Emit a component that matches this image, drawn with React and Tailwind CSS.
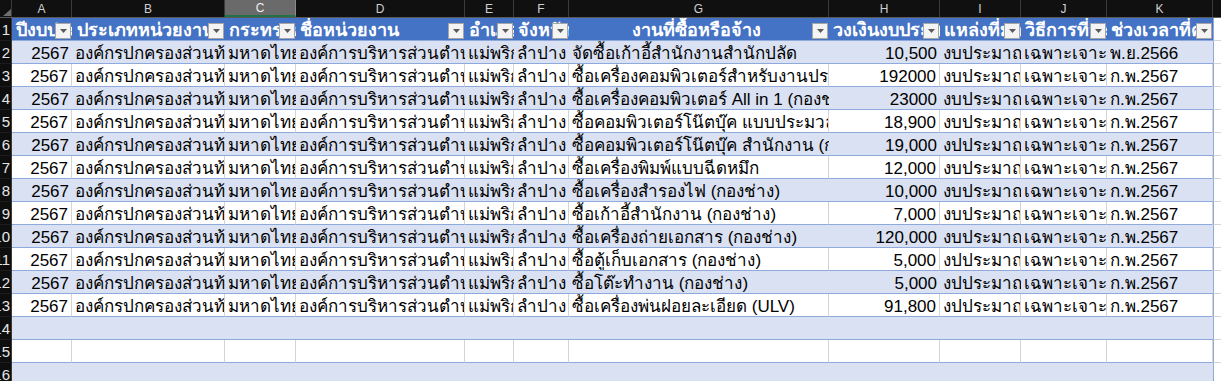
import React from "react";

const cols = [
  { letter: "A", w: "w-[60px]", head: "ปีงบประมาณ" },
  { letter: "B", w: "w-[153px]", head: "ประเภทหน่วยงาน", center: true },
  { letter: "C", w: "w-[71px]", head: "กระทรวง" },
  { letter: "D", w: "w-[169px]", head: "ชื่อหน่วยงาน" },
  { letter: "E", w: "w-[49px]", head: "อำเภอ" },
  { letter: "F", w: "w-[55px]", head: "จังหวัด" },
  { letter: "G", w: "w-[260px]", head: "งานที่ซื้อหรือจ้าง", center: true },
  { letter: "H", w: "w-[111px]", head: "วงเงินงบประมาณ (บาท)" },
  { letter: "I", w: "w-[81px]", head: "แหล่งที่มาของงบประมาณ" },
  { letter: "J", w: "w-[86px]", head: "วิธีการที่จะจัดหา" },
  { letter: "K", w: "w-[106px]", head: "ช่วงเวลาที่คาดว่าจะเริ่มดำเนินการ" },
];

const items = [
  ["จัดซื้อเก้าอี้สำนักงานสำนักปลัด", "10,500", "งบประมาณ", "พ.ย.2566"],
  ["ซื้อเครื่องคอมพิวเตอร์สำหรับงานประมวลผล", "192000", "งบประมาณ", "ก.พ.2567"],
  ["ซื้อเครื่องคอมพิวเตอร์ All in 1 (กองช่าง)", "23000", "งบประมาณ", "ก.พ.2567"],
  ["ซื้อคอมพิวเตอร์โน๊ตบุ๊ค แบบประมวลผล", "18,900", "งบประมาณ", "ก.พ.2567"],
  ["ซื้อคอมพิวเตอร์โน๊ตบุ๊ค สำนักงาน (กองคลัง)", "19,000", "งปประมาณ", "ก.พ.2567"],
  ["ซื้อเครื่องพิมพ์แบบฉีดหมึก", "12,000", "งบประมาณ", "ก.พ.2567"],
  ["ซื้อเครื่องสำรองไฟ (กองช่าง)", "10,000", "งบประมาณ", "ก.พ.2567"],
  ["ซื้อเก้าอี้สำนักงาน (กองช่าง)", "7,000", "งบประมาณ", "ก.พ.2567"],
  ["ซื้อเครื่องถ่ายเอกสาร (กองช่าง)", "120,000", "งบประมาณ", "ก.พ.2567"],
  ["ซื้อตู้เก็บเอกสาร (กองช่าง)", "5,000", "งปประมาณ", "ก.พ.2567"],
  ["ซื้อโต๊ะทำงาน (กองช่าง)", "5,000", "งปประมาณ", "ก.พ.2567"],
  ["ซื้อเครื่องพ่นฝอยละเอียด (ULV)", "91,800", "งปประมาณ", "ก.พ.2567"],
];

const rows = items.map((it) => [
  "2567",
  "องค์กรปกครองส่วนท้องถิ่น",
  "มหาดไทย",
  "องค์การบริหารส่วนตำบลแม่พริก",
  "แม่พริก",
  "ลำปาง",
  it[0],
  it[1],
  it[2],
  "เฉพาะเจาะจง",
  it[3],
]);

const rightAligned = [0, 7];

function FilterButton() {
  return (
    <div className="absolute right-[1px] bottom-[1px] w-[16px] h-[16px] bg-[#f4f4f4] border border-[#a6a6a6] flex items-center justify-center">
      <svg width="7" height="4" viewBox="0 0 7 4">
        <path d="M0 0 H7 L3.5 4 Z" fill="#5a5a5a" />
      </svg>
    </div>
  );
}

function RowHeader({ n }) {
  return (
    <div className="w-[12px] shrink-0 h-full bg-[#0e0e0e] border-r border-[#3a3a3a] border-b border-b-[#1c1c1c] overflow-hidden flex items-end justify-end pr-[1px]">
      <span className="text-[15px] leading-[20px] text-[#e6e6e6] whitespace-nowrap">{n}</span>
    </div>
  );
}

function Filler() {
  return <div className="flex-1 h-full bg-white border-l border-[#8ea9db] border-b border-b-[#d4d4d4]" />;
}

export default function App() {
  const emptyRows = [14, 15, 16];
  return (
    <div
      className="w-[1221px] h-[381px] overflow-hidden bg-white"
      style={{ fontFamily: '"Liberation Sans", Arial, sans-serif' }}
    >
      {/* column letters */}
      <div className="flex h-[18px] bg-[#101010] border-b border-[#5a5a5a]">
        <div className="w-[12px] shrink-0 border-r border-[#3a3a3a] relative">
          <svg className="absolute left-[3px] top-[9px]" width="8" height="7" viewBox="0 0 8 7">
            <path d="M8 0 V7 H0 Z" fill="#6f6f6f" />
          </svg>
        </div>
        {cols.map((c) =>
          c.letter === "C" ? (
            <div
              key={c.letter}
              className={`${c.w} shrink-0 bg-[#6a6a6a] border-b-2 border-[#217346] border-r border-r-[#8a8a8a] flex items-center justify-center text-[12px] text-[#f0f0f0]`}
            >
              {c.letter}
            </div>
          ) : (
            <div
              key={c.letter}
              className={`${c.w} shrink-0 border-r border-[#3a3a3a] flex items-center justify-center text-[12px] text-[#cfcfcf]`}
            >
              {c.letter}
            </div>
          )
        )}
        <div className="flex-1" />
      </div>

      {/* header row */}
      <div className="flex h-[23px]">
        <RowHeader n="1" />
        {cols.map((c) => (
          <div
            key={c.letter}
            className={`${c.w} shrink-0 h-full relative overflow-hidden bg-[#4472c4] border-b border-[#8ea9db] flex items-end ${c.center ? "justify-center pr-[6px]" : "pl-[4px]"}`}
          >
            <span className="text-[18px] font-bold leading-[19px] text-white whitespace-nowrap">{c.head}</span>
            <FilterButton />
          </div>
        ))}
        <Filler />
      </div>

      {/* data rows */}
      {rows.map((r, i) => {
        const band = i % 2 === 0;
        return (
          <div key={i} className="flex h-[23px]">
            <RowHeader n={String(i + 2)} />
            {r.map((v, j) => (
              <div
                key={j}
                className={`${cols[j].w} shrink-0 h-full overflow-hidden flex items-end border-b border-b-[#8ea9db] ${
                  band ? "bg-[#d9e1f2]" : "bg-white border-r border-r-[#d4d4d4]"
                } ${rightAligned.includes(j) ? "justify-end pr-[3px]" : "pl-[3px]"}`}
              >
                <span className="text-[17px] leading-[19px] text-black whitespace-nowrap">{v}</span>
              </div>
            ))}
            <Filler />
          </div>
        );
      })}

      {emptyRows.map((n) => {
        const band = n % 2 === 0;
        return (
          <div key={n} className="flex h-[23px]">
            <RowHeader n={String(n)} />
            {cols.map((c) => (
              <div
                key={c.letter}
                className={`${c.w} shrink-0 h-full border-b border-b-[#8ea9db] ${band ? "bg-[#d9e1f2]" : "bg-white border-r border-r-[#d4d4d4]"}`}
              />
            ))}
            <Filler />
          </div>
        );
      })}
    </div>
  );
}
